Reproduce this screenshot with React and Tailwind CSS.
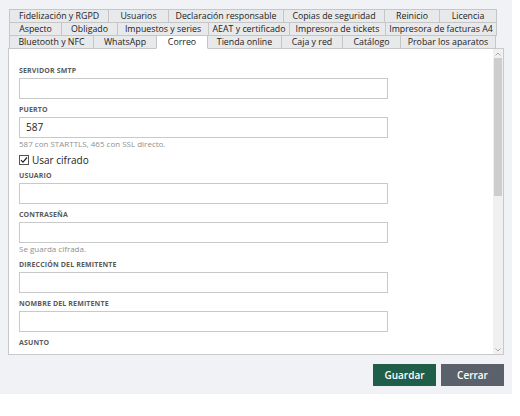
const ROWS = [
  [
    ["Fidelización y RGPD", "w-[100px]"],
    ["Usuarios", "w-[61px]"],
    ["Declaración responsable", "w-[116px]"],
    ["Copias de seguridad", "w-[102px]"],
    ["Reinicio", "w-[56px]"],
    ["Licencia", "w-[58px]"],
  ],
  [
    ["Aspecto", "w-[53px]"],
    ["Obligado", "w-[57px]"],
    ["Impuestos y series", "w-[92px]"],
    ["AEAT y certificado", "w-[82px]"],
    ["Impresora de tickets", "w-[97px]"],
    ["Impresora de facturas A4", "w-[112px]"],
  ],
  [
    ["Bluetooth y NFC", "w-[85px]"],
    ["WhatsApp", "w-[64px]"],
    ["Correo", "w-[52px]"],
    ["Tienda online", "w-[75px]"],
    ["Caja y red", "w-[62px]"],
    ["Catálogo", "w-[59px]"],
    ["Probar los aparatos", "w-[96px]"],
  ],
];

const ACTIVE = "Correo";

function Label({ children }) {
  return (
    <div className="text-[7px] leading-[11px] font-bold tracking-[0.02em] text-[#5a5a5a] uppercase mb-[2px]">
      {children}
    </div>
  );
}

function Field({ label, value = "", hint }) {
  return (
    <div className="mb-[5px]">
      <Label>{label}</Label>
      <div className="w-[369px] h-[21px] border border-[#c9c9c9] bg-white px-[6px] text-[10px] leading-[19px] text-[#222]">
        {value}
      </div>
      {hint && (
        <div className="mt-[1px] text-[8px] leading-[10px] text-[#8f8f8f]">{hint}</div>
      )}
    </div>
  );
}

export default function App() {
  return (
    <div className="w-[520px] h-[416px] bg-white" style={{ fontFamily: '"Open Sans", "Noto Sans", sans-serif' }}>
      <div className="w-[512px] h-[394px] bg-[#f0f2f5] pt-[9px] px-[8px]">
        <div className="px-[1px]">
          {ROWS.map((row, i) => (
            <div key={i} className="flex h-[13px]">
              {row.map(([name, w], j) => (
                <div
                  key={name}
                  className={
                    "h-[14px] -mb-[1px] border border-[#c6c6c6] text-[8.8px] leading-[12px] text-[#222] text-center whitespace-nowrap overflow-hidden " +
                    w +
                    (j > 0 ? " -ml-[1px]" : "") +
                    (name === ACTIVE ? " bg-white border-b-white relative z-10" : " bg-[#e8e9eb]")
                  }
                >
                  {name}
                </div>
              ))}
            </div>
          ))}
        </div>
        <div className="h-[307px] border border-[#c9c9c9] bg-white flex">
          <div className="flex-1 overflow-hidden pt-[16px] pl-[10px]">
            <Field label="Servidor SMTP" />
            <Field label="Puerto" value="587" hint="587 con STARTTLS, 465 con SSL directo." />
            <div className="-mt-[1px] h-[14px] flex items-center gap-[3px] text-[10px] text-[#222] mb-[3px]">
              <span className="w-[10px] h-[10px] border border-[#555] bg-white flex items-center justify-center">
                <svg width="8" height="8" viewBox="0 0 8 8">
                  <path d="M1 4.2 L3 6.2 L7 1.5" fill="none" stroke="#222" strokeWidth="1.2" />
                </svg>
              </span>
              Usar cifrado
            </div>
            <Field label="Usuario" />
            <Field label="Contraseña" hint="Se guarda cifrada." />
            <Field label="Dirección del remitente" />
            <Field label="Nombre del remitente" />
            <Label>Asunto</Label>
          </div>
          <div className="w-[10px] bg-[#f0f0f0] flex flex-col items-center">
            <div className="h-[9px] flex items-center justify-center">
              <svg width="6" height="4" viewBox="0 0 6 4">
                <path d="M0.5 3.5 L3 1 L5.5 3.5" fill="none" stroke="#a0a0a0" strokeWidth="0.9" />
              </svg>
            </div>
            <div className="w-[8px] h-[138px] bg-[#cdcdcd]" />
            <div className="flex-1" />
            <div className="h-[9px] flex items-center justify-center">
              <svg width="6" height="4" viewBox="0 0 6 4">
                <path d="M0.5 0.5 L3 3 L5.5 0.5" fill="none" stroke="#a0a0a0" strokeWidth="0.9" />
              </svg>
            </div>
          </div>
        </div>
        <div className="flex justify-end gap-[5px] mt-[9px]">
          <button className="w-[63px] h-[22px] bg-[#1f5e48] text-white text-[10px] font-semibold">
            Guardar
          </button>
          <button className="w-[63px] h-[22px] bg-[#5b616a] text-white text-[10px] font-semibold">
            Cerrar
          </button>
        </div>
      </div>
    </div>
  );
}
